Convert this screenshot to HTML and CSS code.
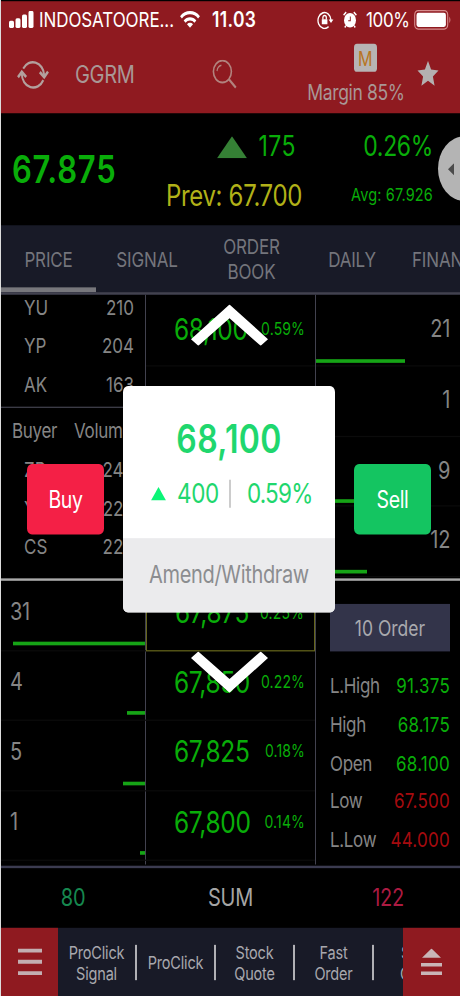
FILE: index.html
```html
<!DOCTYPE html>
<html lang="en">
  <head>
    <meta charset="UTF-8" />
    <meta name="viewport" content="width=device-width, initial-scale=1.0" />
    <title>GGRM</title>
    <link rel="stylesheet" href="styles.css">
  </head>

  <body>
    <div class="screen">
      <header class="header">
        <div class="status">
          <svg class="signal" viewBox="0 0 25 14" fill="#fff">
            <rect x="0" y="8" width="5" height="6" rx="1.5" />
            <rect x="6.5" y="6" width="5" height="8" rx="1.5" />
            <rect x="13" y="3" width="5" height="11" rx="1.5" />
            <rect x="19.5" y="0" width="5" height="14" rx="1.5" />
          </svg>
          <span class="carrier">INDOSATOORE...</span>
          <svg class="wifi" viewBox="0 0 20 14" fill="none" stroke="#fff" stroke-width="2.6">
            <path d="M1 5.2a12.6 12.6 0 0 1 18 0" />
            <path d="M4.6 8.7a7.6 7.6 0 0 1 10.8 0" />
            <path d="M10 13.8 7 10.9a4.3 4.3 0 0 1 6 0z" fill="#fff" stroke="none" />
          </svg>
          <span class="clock">11.03</span>
          <svg class="lock" viewBox="0 0 17 15" fill="none" stroke="#fff" stroke-width="1.3">
            <path d="M11.6 12.9A6.5 6.5 0 1 1 14 7.5" />
            <path d="M11.6 7h4.8L14 9.8z" fill="#fff" stroke="none" />
            <path d="M4.8 6.8h5.6v4.2H4.8z" fill="#fff" stroke="none" />
            <path d="M5.9 7V5.4a1.7 1.7 0 0 1 3.4 0V7" />
          </svg>
          <svg class="alarm" viewBox="0 0 14 14">
            <circle cx="7" cy="7.6" r="6" fill="#fff" />
            <path d="M.6 3.4 3.2.9M13.4 3.4 10.8.9M2.8 12.2l-1 1.4M11.2 12.2l1 1.4" stroke="#fff" stroke-width="1.4" />
            <path d="M7.3 4.6v3.4H5.2" fill="none" stroke="#8f1a20" stroke-width=".9" />
          </svg>
          <span class="percent">100%</span>
          <svg class="battery" viewBox="0 0 38 17">
            <rect x=".7" y=".7" width="33" height="15.2" rx="3.5" fill="none" stroke="#d78d8d" stroke-width="1.1" />
            <rect x="2.5" y="2.4" width="29.4" height="11.8" rx="2" fill="#fff" />
            <path d="M35.4 5.6q2 2.7 0 5.4z" fill="#d78d8d" />
          </svg>
        </div>

        <div class="toolbar">
          <svg class="refresh" viewBox="0 0 32 26" fill="none" stroke="#b3a09d" stroke-width="2">
            <path d="M6.2 8.4A11.4 11.4 0 0 1 27.2 13.6" />
            <path d="M26.3 17.8A11.4 11.4 0 0 1 4.8 12.4" />
            <path d="M22.8 11.2l4.4 4.2 3.8-4.6M1 15.4l3.8-4.4 4.4 4.2" stroke-width="2.4" />
          </svg>
          <span class="symbol">GGRM</span>
          <svg class="search" viewBox="0 0 25 24" fill="none" stroke="#b2837e" stroke-width="1.6">
            <circle cx="10.4" cy="9.8" r="9" />
            <path d="M17 16.2l6.8 6.8" stroke-width="2" />
            <path d="M5 9.4a5.6 5.6 0 0 1 4.4-4.8" stroke-width="1.1" />
          </svg>
          <div class="margin">
            <span class="margin-badge">M</span>
            <span>Margin 85%</span>
          </div>
          <svg class="star" viewBox="0 0 22 21" fill="#b4b0b0">
            <path d="M11 0l3.1 7 7.4.8-5.6 5 1.7 7.6-6.6-4-6.6 4 1.7-7.6-5.6-5 7.4-.8z" />
          </svg>
        </div>
      </header>

      <section class="quote">
        <strong class="last">67.875</strong>
        <div class="change">
          <div class="change-value">
            <svg class="up" viewBox="0 0 30 18"><path d="M15 0l15 18H0z" fill="#358035" /></svg>
            <span>175</span>
          </div>
          <div class="prev">Prev: 67.700</div>
        </div>
        <div class="rate">
          <div class="rate-value">0.26%</div>
          <div class="avg">Avg: 67.926</div>
        </div>
        <div class="handle">
          <svg viewBox="0 0 6 10"><path d="M6 0v10L0 5z" fill="#4b4b4b" /></svg>
        </div>
      </section>

      <nav class="tabs">
        <span class="tab active">PRICE</span>
        <span class="tab signal-tab">SIGNAL</span>
        <span class="tab order-tab">ORDER BOOK</span>
        <span class="tab">DAILY</span>
        <span class="tab last-tab">FINANCE</span>
      </nav>

      <main class="book">
        <div class="half upper">
          <div class="col brokers">
            <div class="sellers">
              <div class="broker"><span>YU</span><span>210</span></div>
              <div class="broker"><span>YP</span><span>204</span></div>
              <div class="broker"><span>AK</span><span>163</span></div>
            </div>
            <div class="buyers">
              <div class="broker-head"><span>Buyer</span><span>Volume</span></div>
              <div class="broker"><span>ZP</span><span>243</span></div>
              <div class="broker"><span>YU</span><span>226</span></div>
              <div class="broker"><span>CS</span><span>220</span></div>
            </div>
          </div>
          <div class="col prices">
            <div class="row"><b>68,100</b><i>0.59%</i></div>
            <div class="row"></div>
            <div class="row"></div>
            <div class="row"></div>
          </div>
          <div class="col offers">
            <div class="row">21<div class="bar" style="width: 89px"></div></div>
            <div class="row">1<div class="bar" style="width: 5px"></div></div>
            <div class="row">9<div class="bar" style="width: 41px"></div></div>
            <div class="row">12<div class="bar" style="width: 51px"></div></div>
          </div>
        </div>

        <div class="half lower">
          <div class="col bids">
            <div class="row">31<div class="bar" style="width: 132px"></div></div>
            <div class="row">4<div class="bar" style="width: 18px"></div></div>
            <div class="row">5<div class="bar" style="width: 22px"></div></div>
            <div class="row">1<div class="bar" style="width: 5px"></div></div>
          </div>
          <div class="col prices">
            <div class="row current"><b>67,875</b><i>0.25%</i></div>
            <div class="row"><b>67,850</b><i>0.22%</i></div>
            <div class="row"><b>67,825</b><i>0.18%</i></div>
            <div class="row"><b>67,800</b><i>0.14%</i></div>
          </div>
          <div class="col stats">
            <button class="order-button" type="button">10 Order</button>
            <div class="stat"><span>L.High</span><span class="gain">91.375</span></div>
            <div class="stat"><span>High</span><span class="gain">68.175</span></div>
            <div class="stat"><span>Open</span><span class="gain">68.100</span></div>
            <div class="stat"><span>Low</span><span class="loss">67.500</span></div>
            <div class="stat"><span>L.Low</span><span class="loss">44.000</span></div>
          </div>
        </div>
      </main>

      <div class="sum">
        <span class="sum-bid">80</span>
        <span>SUM</span>
        <span class="sum-offer">122</span>
      </div>

      <footer class="footer">
        <div class="menu">
          <svg viewBox="0 0 24 22" fill="#c3aeb1">
            <path d="M0 0h24v3.2H0zM0 9.3h24v3.2H0zM0 18.6h24v3.2H0z" />
          </svg>
        </div>
        <div class="shortcuts">
          <span class="shortcut">ProClick Signal</span>
          <span class="shortcut">ProClick</span>
          <span class="shortcut">Stock Quote</span>
          <span class="shortcut">Fast Order</span>
          <span class="shortcut next">S<br />O</span>
        </div>
        <div class="menu">
          <svg class="eject" viewBox="0 0 21 22" fill="#c9b5b7">
            <path d="M10.5 0L20 7.6H1zM0 11.8h21v3H0zM0 18.8h21v3H0z" />
          </svg>
        </div>
      </footer>

      <div class="overlay">
        <svg class="chevron" viewBox="0 0 77 34"><path d="M38.5 0L77 28.6 69.7 34 38.5 11.4 7.3 34 0 28.6z" fill="#fff" /></svg>
        <div class="actions">
          <button class="trade buy" type="button">Buy</button>
          <div class="popup">
            <div class="popup-main">
              <div class="popup-price">68,100</div>
              <div class="popup-change">
                <svg viewBox="0 0 15 11"><path d="M7.5 0L15 11H0z" fill="#0bf577" /></svg>
                <span>400</span>
                <span class="popup-rate">0.59%</span>
              </div>
            </div>
            <div class="popup-footer">Amend/Withdraw</div>
          </div>
          <button class="trade sell" type="button">Sell</button>
        </div>
        <svg class="chevron" viewBox="0 0 77 34"><path d="M38.5 34L77 5.4 69.7 0 38.5 22.6 7.3 0 0 5.4z" fill="#fff" /></svg>
      </div>
    </div>
  </body>
</html>
```
FILE: styles.css
```css
:root {
  --red: #8f1a20;
  --navy: #181a27;
  --line: #42424f;
  --green: #09ad09;
  --grey: #858585;
}

* {
  box-sizing: border-box;
  margin: 0;
  padding: 0;
}

body {
  background-color: #ddd;
  height: 996px;
  overflow: hidden;
}

.screen {
  background-color: #000;
  color: var(--grey);
  display: flex;
  flex-direction: column;
  font-family: Inter, Roboto, sans-serif;
  font-size: 17px;
  height: 818px;
  letter-spacing: -0.02em;
  line-height: 1;
  margin-left: 1px;
  overflow: hidden;
  padding-top: 1px;
  position: relative;
  transform: scaleY(1.2176);
  transform-origin: 0 0;
  width: 459px;
}

svg {
  display: block;
  flex: none;
}

button {
  border: none;
  font-family: inherit;
  letter-spacing: inherit;
}

/* header */

.header {
  background-color: var(--red);
  flex: none;
  height: 92px;
}

.status {
  align-items: center;
  color: #fff;
  display: flex;
  height: 30px;
  padding-left: 8px;
}

.signal {
  height: 14px;
  width: 25px;
}

.carrier {
  letter-spacing: -0.005em;
  margin-left: 5px;
  width: 141px;
}

.wifi {
  height: 14px;
  width: 20px;
}

.clock {
  font-size: 17.5px;
  font-weight: 600;
  letter-spacing: 0.02em;
  margin-left: 12px;
  width: 105px;
}

.lock {
  height: 15px;
  width: 17px;
}

.alarm {
  height: 14px;
  margin-left: 9px;
  width: 14px;
}

.percent {
  margin-left: 9px;
  width: 48px;
}

.battery {
  height: 17px;
  width: 38px;
}

.toolbar {
  align-items: center;
  color: #a99795;
  display: flex;
  height: 62px;
  padding: 0 0 2px 16px;
}

.refresh {
  height: 26px;
  width: 32px;
}

.symbol {
  font-size: 20px;
  margin-left: 26px;
  width: 137px;
}

.search {
  height: 24px;
  width: 25px;
}

.margin {
  align-items: center;
  display: flex;
  flex-direction: column;
  font-size: 17.5px;
  gap: 8px;
  margin-left: 70px;
  margin-top: -1px;
  width: 98px;
  white-space: nowrap;
}

.margin-badge {
  background-color: #b7b4b4;
  border-radius: 3px;
  color: #b87422;
  font-size: 16px;
  height: 23px;
  line-height: 24px;
  margin-left: 18px;
  text-align: center;
  width: 23px;
}

.star {
  height: 21px;
  margin: -1px 0 0 12px;
  width: 22px;
}

/* quote */

.quote {
  color: var(--green);
  display: flex;
  flex: none;
  height: 92px;
  position: relative;
}

.last {
  font-size: 31px;
  font-weight: 600;
  letter-spacing: 0.025em;
  padding: 30px 0 0 11px;
  width: 158px;
}

.change {
  font-size: 23px;
  padding-top: 16px;
  width: 150px;
}

.change-value {
  align-items: center;
  display: flex;
  gap: 11px;
  justify-content: flex-end;
  letter-spacing: 0.02em;
  padding-right: 13px;
}

.up {
  height: 18px;
  width: 30px;
}

.prev {
  color: #b1b118;
  font-size: 24px;
  padding: 17px 0 0 7px;
  white-space: nowrap;
}

.rate {
  padding-top: 16px;
  text-align: right;
  width: 124px;
}

.rate-value {
  font-size: 23px;
}

.avg {
  font-size: 14.5px;
  letter-spacing: 0.01em;
  padding-top: 21px;
}

.handle {
  align-items: center;
  background-color: #b4b4b4;
  border-radius: 50%;
  display: flex;
  height: 53px;
  padding-left: 10px;
  position: absolute;
  left: 437px;
  top: 19px;
  width: 53px;
}

.handle svg {
  height: 10px;
  width: 6px;
}

/* tabs */

.tabs {
  background-color: var(--navy);
  border-bottom: 2px solid var(--line);
  color: #74757c;
  display: flex;
  flex: none;
  height: 57px;
  letter-spacing: -0.01em;
  overflow: hidden;
}

.tab {
  align-items: center;
  display: flex;
  flex: none;
  justify-content: center;
  line-height: 20px;
  text-align: center;
  width: 94px;
}

.active {
  border-bottom: 4px solid #77777c;
  padding-top: 4px;
  width: 95px;
}

.signal-tab {
  width: 102px;
}

.order-tab {
  padding: 0 20px;
  width: 107px;
}

.last-tab {
  justify-content: flex-start;
  margin-left: 13px;
}

/* order book */

.book {
  flex: none;
  height: 469px;
}

.half {
  display: grid;
  grid-template-columns: 145px 170px 144px;
}

.upper {
  border-bottom: 2px solid #aaa;
  height: 235px;
}

.lower {
  height: 233px;
}

.col {
  overflow: hidden;
}

.prices {
  border-left: 1px solid var(--line);
  border-right: 1px solid var(--line);
  margin-left: -1px;
}

.row {
  align-items: center;
  border-bottom: 1px solid #0b0b0b;
  display: flex;
  font-size: 20px;
  height: 57.6px;
  padding-bottom: 2px;
  position: relative;
}

.upper .row:first-child {
  height: 59px;
}

.lower .row {
  padding-bottom: 6px;
}

.offers .row {
  justify-content: flex-end;
  padding-right: 10px;
}

.bids .row {
  padding-left: 9px;
}

.bar {
  background-color: #16a416;
  bottom: 2px;
  height: 3px;
  position: absolute;
}

.offers .bar {
  left: 0;
}

.bids .bar {
  bottom: 4px;
  right: 1px;
}

.prices .row {
  color: var(--green);
  justify-content: space-between;
  padding-left: 28px;
  padding-right: 10px;
}

.prices b {
  font-size: 24.5px;
  font-weight: 400;
}

.prices i {
  font-size: 14px;
  font-style: normal;
  letter-spacing: 0.01em;
}

.prices .current {
  border: 1px solid #66661c;
}

.sellers {
  border-bottom: 1px solid var(--line);
  height: 93px;
}

.sellers .broker:first-child {
  height: 26px;
  padding-bottom: 4px;
}

.broker {
  align-items: center;
  display: flex;
  height: 31.7px;
  justify-content: space-between;
  letter-spacing: 0;
  padding: 1px 12px 0 23px;
}

.broker-head {
  align-items: center;
  display: flex;
  gap: 17px;
  height: 35px;
  padding: 4px 0 0 11px;
}

.stats {
  padding: 19px 10px 0 14px;
}

.order-button {
  background-color: #33344a;
  color: #a9a9ae;
  display: block;
  font-size: 17.5px;
  height: 39px;
  letter-spacing: 0;
  margin-bottom: 13px;
  width: 120px;
}

.stat {
  align-items: center;
  display: flex;
  height: 31.7px;
  justify-content: space-between;
}

.gain {
  color: var(--green);
  letter-spacing: 0.015em;
}

.loss {
  color: #a50b0f;
  letter-spacing: 0.015em;
}

/* totals */

.sum {
  align-items: center;
  border-top: 2px solid #3b3b50;
  color: #a5a5a5;
  display: grid;
  flex: none;
  font-size: 20px;
  grid-template-columns: 144px 171px 144px;
  height: 51px;
  padding-bottom: 1px;
  text-align: center;
}

.sum-bid {
  color: #16884f;
}

.sum-offer {
  color: #ac1b42;
}

/* footer */

.footer {
  background-color: var(--navy);
  display: flex;
  flex: 1;
}

.menu {
  align-items: center;
  background-color: var(--red);
  display: flex;
  flex: none;
  justify-content: center;
  width: 57px;
}

.menu svg {
  height: 22px;
  width: 24px;
}

.menu .eject {
  width: 21px;
}

.shortcuts {
  align-items: center;
  color: #a8a8ae;
  display: flex;
  flex: 1;
  letter-spacing: -0.01em;
  overflow: hidden;
  padding-top: 1px;
}

.shortcut {
  align-items: center;
  border-right: 2px solid #b0b0b5;
  display: flex;
  flex: none;
  font-size: 14.5px;
  height: 29px;
  justify-content: center;
  line-height: 17px;
  padding: 0 10px;
  text-align: center;
  width: 79px;
}

.next {
  justify-content: flex-start;
  padding-left: 26px;
}

/* quick order popup */

.overlay {
  align-items: center;
  display: flex;
  flex-direction: column;
  left: 0;
  position: absolute;
  top: 250px;
  width: 456px;
}

.chevron {
  height: 34px;
  width: 77px;
}

.actions {
  align-items: center;
  display: flex;
  gap: 19px;
  margin: 33px 0 32px;
}

.trade {
  border-radius: 5px;
  color: #fff;
  font-size: 19.5px;
  height: 58px;
  width: 77px;
}

.buy {
  background-color: #f42046;
}

.sell {
  background-color: #14c561;
}

.popup {
  background-color: #fff;
  border-radius: 5px;
  color: #1fd76e;
  height: 186px;
  overflow: hidden;
  width: 212px;
}

.popup-main {
  height: 125px;
  padding-top: 28px;
}

.popup-price {
  font-size: 32px;
  font-weight: 600;
  letter-spacing: 0.01em;
  text-align: center;
}

.popup-change {
  align-items: center;
  display: flex;
  font-size: 22.5px;
  padding: 17px 0 0 28px;
}

.popup-change svg {
  height: 11px;
  margin-right: 11px;
  width: 15px;
}

.popup-rate {
  border-left: 2px solid #ccc;
  letter-spacing: -0.035em;
  margin-left: 10px;
  padding-left: 16px;
}

.popup-footer {
  background-color: #ebebed;
  color: #8b8d90;
  font-size: 20px;
  height: 61px;
  line-height: 60px;
  text-align: center;
}
```
